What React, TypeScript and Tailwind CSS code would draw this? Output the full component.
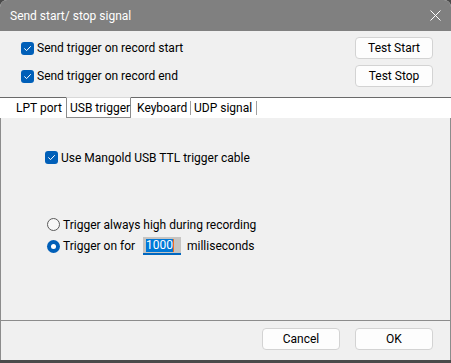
import React from "react";

const font = { fontFamily: 'Roboto, "Noto Sans", sans-serif' };

function CheckBox() {
  return (
    <div className="w-[13px] h-[13px] rounded-[3px] bg-[#005fb8] flex items-center justify-center shrink-0">
      <svg width="9" height="9" viewBox="0 0 9 9" fill="none">
        <path d="M1.6 4.7 L3.6 6.6 L7.5 2.5" stroke="white" strokeWidth="1" strokeLinecap="round" strokeLinejoin="round" />
      </svg>
    </div>
  );
}

function Radio({ checked }: { checked?: boolean }) {
  if (checked) {
    return (
      <div className="w-[13px] h-[13px] rounded-full bg-[#005fb8] flex items-center justify-center shrink-0">
        <div className="w-[5px] h-[5px] rounded-full bg-white" />
      </div>
    );
  }
  return <div className="w-[13px] h-[13px] rounded-full border border-[#5a5a5a] bg-[#f7f7f7] shrink-0" />;
}

function Btn({ children }: { children: React.ReactNode }) {
  return (
    <div className="w-[78px] h-[22px] rounded-[4px] border border-[#d3d3d3] bg-[#fdfdfd] flex items-center justify-center text-[12px] text-black">
      {children}
    </div>
  );
}

export default function App() {
  return (
    <div className="w-[451px] h-[363px] bg-[#4a4a4a] overflow-hidden">
      <div className="w-[451px] h-[363px] bg-[#f0f0f0] rounded-t-[7px] flex flex-col overflow-hidden text-black text-[12px] whitespace-nowrap" style={font}>
        {/* title bar */}
        <div className="h-[31px] shrink-0 bg-[#808080] flex items-center justify-between pl-[10px] pr-[10px] text-white text-[12px]">
          <span>Send start/ stop signal</span>
          <svg width="11" height="11" viewBox="0 0 11 11">
            <path d="M0.5 0.5 L10.5 10.5 M10.5 0.5 L0.5 10.5" stroke="white" strokeWidth="1" />
          </svg>
        </div>

        {/* top options */}
        <div className="h-[66px] shrink-0 flex flex-col gap-[6px] pt-[6px] pl-[21px] pr-[18px]">
          <div className="h-[22px] flex items-center justify-between">
            <div className="flex items-center gap-[3px]">
              <CheckBox />
              <span>Send trigger on record start</span>
            </div>
            <Btn>Test Start</Btn>
          </div>
          <div className="h-[22px] flex items-center justify-between">
            <div className="flex items-center gap-[3px]">
              <CheckBox />
              <span>Send trigger on record end</span>
            </div>
            <Btn>Test Stop</Btn>
          </div>
        </div>

        {/* tab strip */}
        <div className="h-[21px] shrink-0 flex bg-white">
          <div className="w-[66px] border-t border-[#6a6a6a] pl-[16px] flex items-center">LPT port</div>
          <div className="w-[65px] border-t border-x border-b border-t-[#d8d8d8] border-x-[#8c8c8c] border-b-[#8c8c8c] pl-[3px] flex items-center">USB trigger</div>
          <div className="w-[60px] border-t border-[#6a6a6a] pl-[6px] flex items-center">
            <span className="flex-1">Keyboard</span>
            <span className="w-px h-[14px] bg-[#a0a0a0]" />
          </div>
          <div className="w-[66px] border-t border-[#6a6a6a] pl-[3px] flex items-center">
            <span className="flex-1">UDP signal</span>
            <span className="w-px h-[14px] bg-[#a0a0a0]" />
          </div>
          <div className="flex-1 border-t border-[#6a6a6a]" />
        </div>

        {/* tab page */}
        <div className="h-[202px] shrink-0 border-x border-[#8c8c8c] pl-[44px] pt-[31px] flex flex-col bg-[#f0f0f0]">
          <div className="h-[17px] flex items-center gap-[3px]">
            <CheckBox />
            <span>Use Mangold USB TTL trigger cable</span>
          </div>
          <div className="mt-[50px] h-[17px] flex items-center gap-[3px] pl-[2px]">
            <Radio />
            <span>Trigger always high during recording</span>
          </div>
          <div className="mt-[4px] h-[18px] flex items-center pl-[2px]">
            <Radio checked />
            <span className="ml-[3px] w-[80px]">Trigger on for</span>
            <div className="w-[38px] h-[18px] flex flex-col">
              <div className="h-[16px] bg-[#c6c4c2] flex items-center pl-[3px]">
                <span className="bg-[#0078d7] text-white h-[13px] leading-[13px]">1000</span>
                <span className="w-[1px] h-[13px] bg-[#f07020]" />
              </div>
              <div className="h-[2px] bg-[#0067c0]" />
            </div>
            <span className="ml-[6px]">milliseconds</span>
          </div>
        </div>

        {/* footer */}
        <div className="h-[40px] shrink-0 border-t border-x border-[#8c8c8c] flex justify-end gap-[15px] pt-[7px] pr-[17px]">
          <Btn>Cancel</Btn>
          <Btn>OK</Btn>
        </div>
        <div className="flex-1 bg-[#4a4a4a]" />
      </div>
    </div>
  );
}
